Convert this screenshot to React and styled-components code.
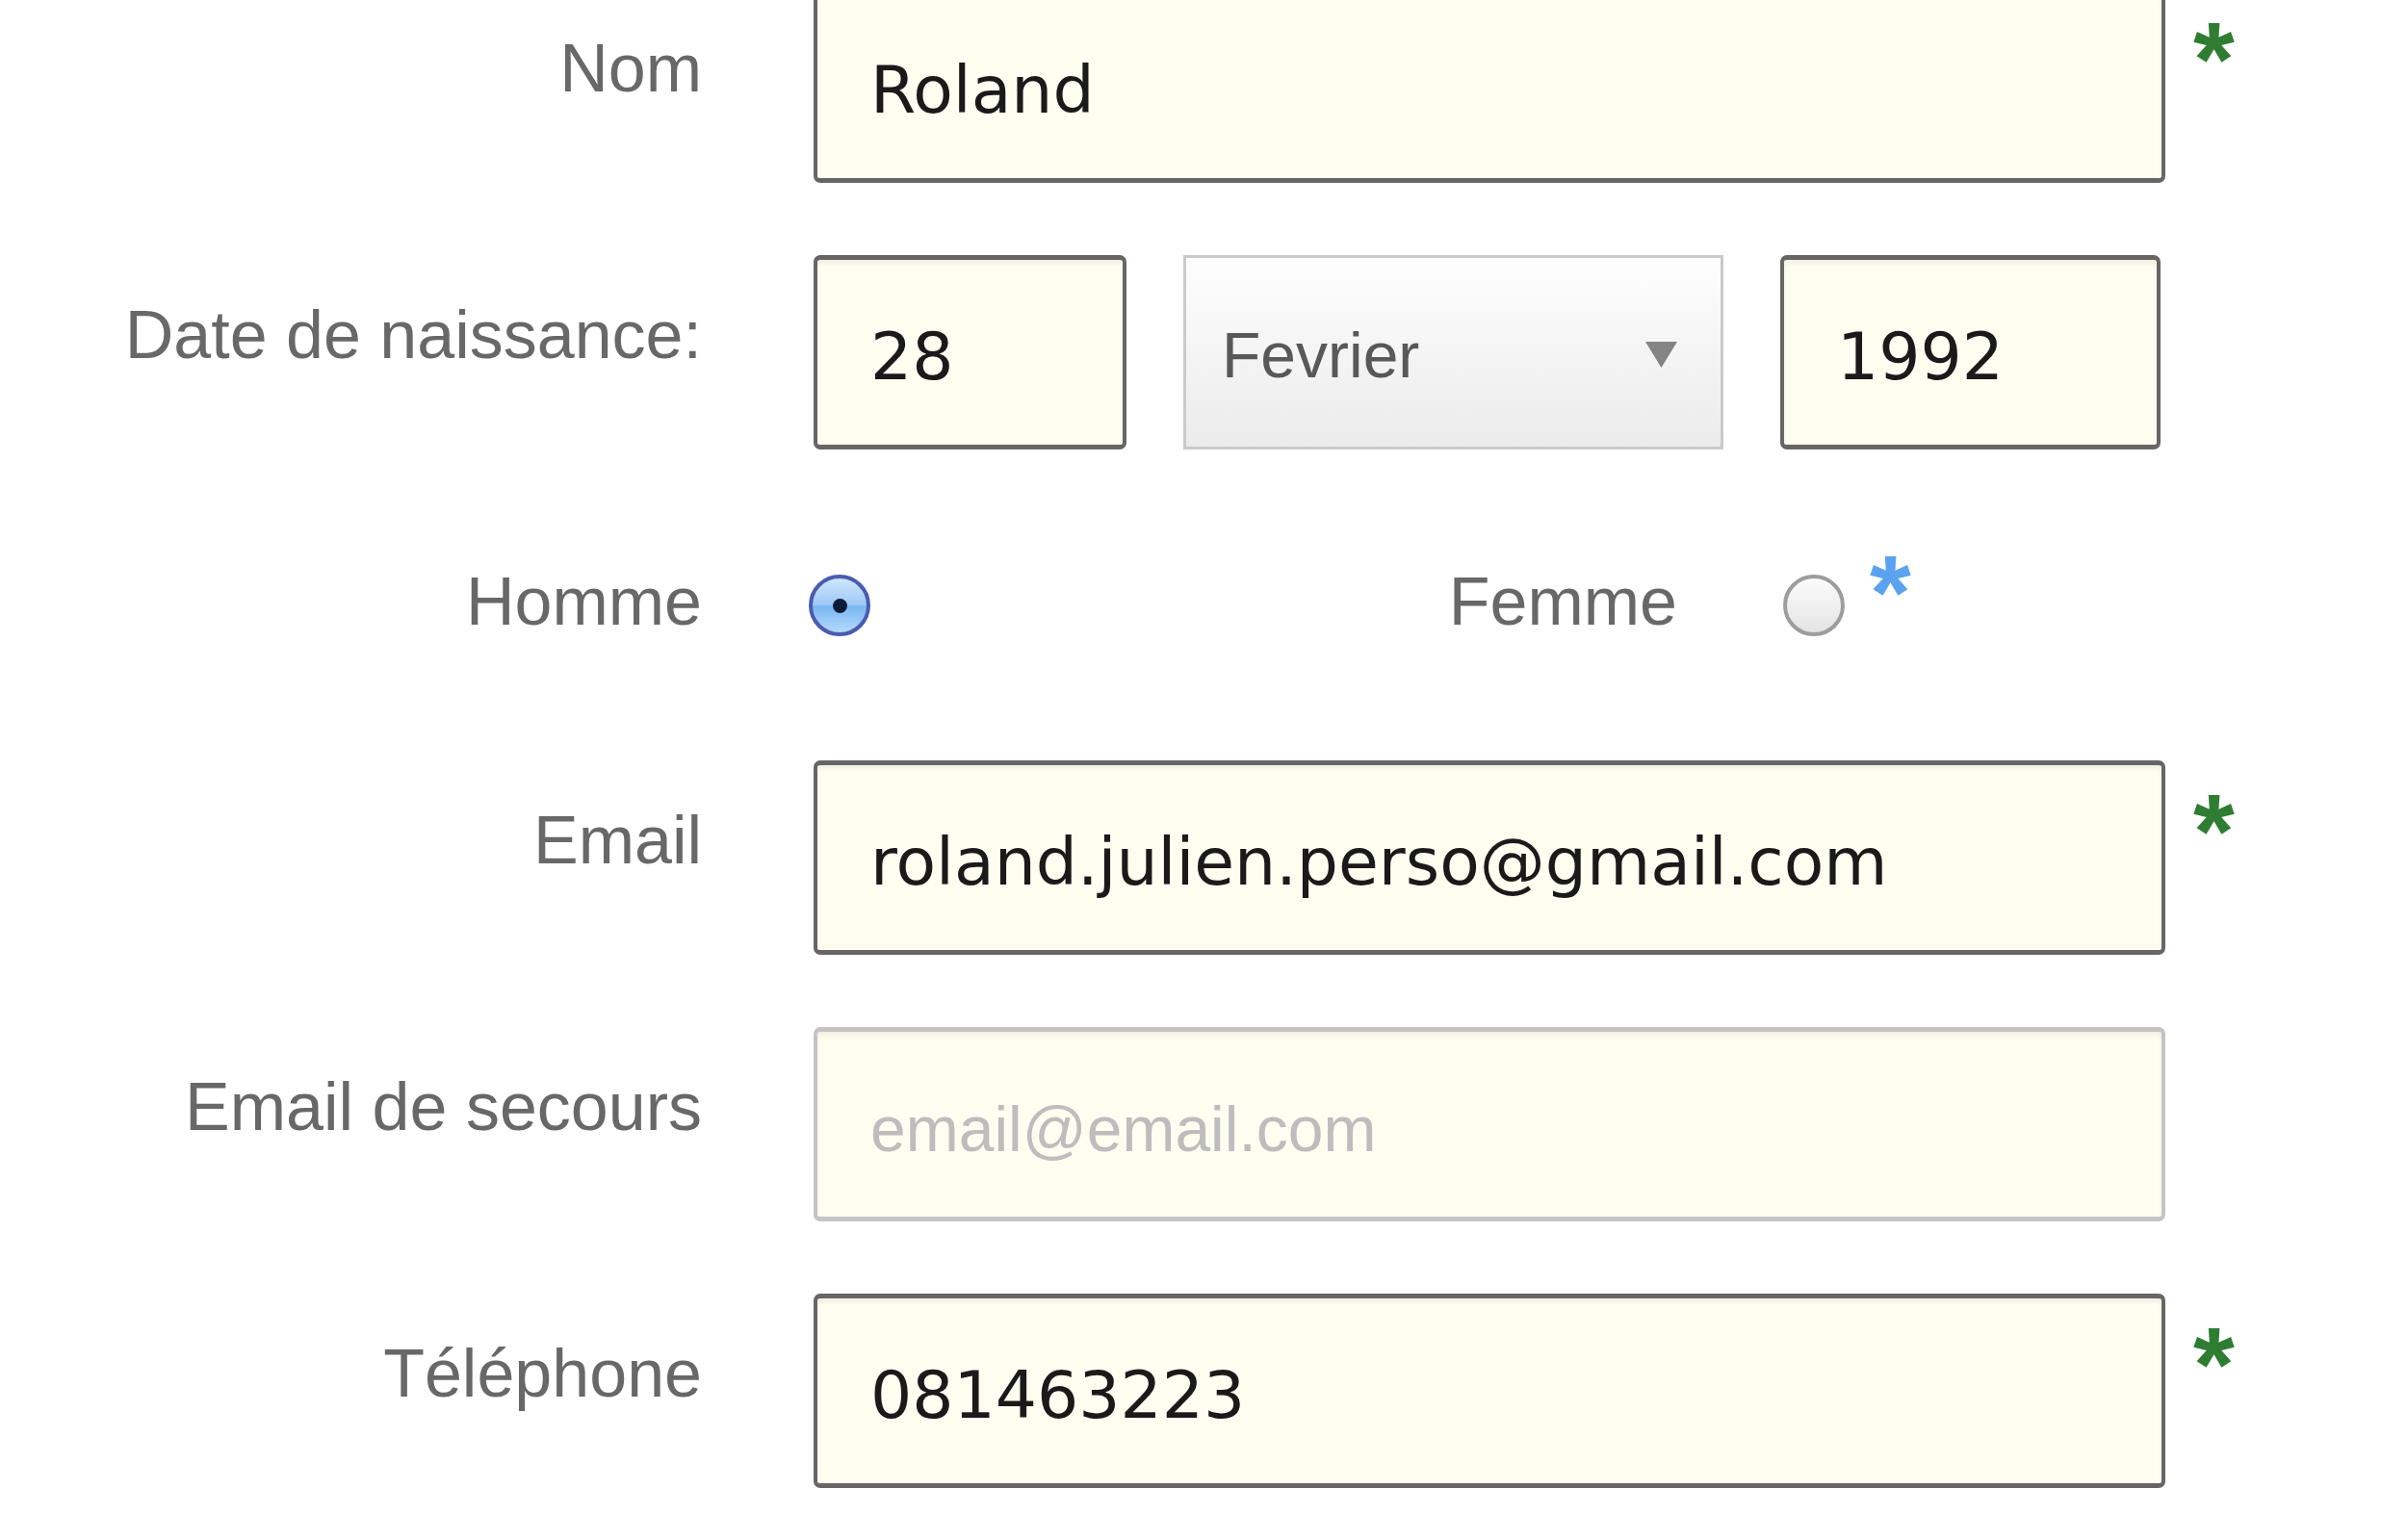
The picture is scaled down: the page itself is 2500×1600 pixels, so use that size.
import React from 'react';
import styled, { createGlobalStyle } from 'styled-components';

const GlobalStyle = createGlobalStyle`
  html, body {
    margin: 0;
    padding: 0;
    background: #ffffff;
  }
`;

const Form = styled.form`
  display: flex;
  flex-direction: column;
  gap: 75px;
  margin-top: -12px;
  width: 2500px;
`;

const Row = styled.div`
  display: flex;
  align-items: flex-start;
  height: ${(p) => p.$height || 202}px;
`;

const Label = styled.label`
  flex: none;
  width: ${(p) => p.$width || 729}px;
  box-sizing: border-box;
  padding-top: 43px;
  text-align: right;
  font-family: 'Liberation Sans', Arial, sans-serif;
  font-size: 70px;
  line-height: 80px;
  color: #686868;
  white-space: nowrap;
`;

const Field = styled.div`
  flex: none;
  display: flex;
  gap: 59px;
  width: 1404px;
  margin-left: 116px;
`;

const TextInput = styled.input`
  flex: none;
  box-sizing: border-box;
  width: ${(p) => (p.$width ? `${p.$width}px` : '100%')};
  height: 202px;
  margin: 0;
  padding: 8px 0 0 55px;
  border: 4px solid ${(p) => (p.$muted ? '#c4c4c4' : '#666666')};
  border-top-width: 5px;
  border-bottom-width: 5px;
  border-radius: 7px;
  background: #fdfdf0;
  box-shadow: inset 0 4px 4px rgba(0, 0, 0, 0.05);
  font-family: 'DejaVu Sans', Verdana, sans-serif;
  font-size: 68px;
  color: #1a1a1a;
  outline: none;

  &::placeholder {
    font-family: 'Liberation Sans', Arial, sans-serif;
    font-size: 66px;
    color: #bdbdbd;
  }
`;

const Select = styled.div`
  flex: none;
  box-sizing: border-box;
  display: flex;
  align-items: center;
  justify-content: space-between;
  width: 561px;
  height: 202px;
  padding: 5px 45px 0 37px;
  border: 3px solid #cacaca;
  background: linear-gradient(#fefefe, #ebebeb);
  font-family: 'Liberation Sans', Arial, sans-serif;
  font-size: 66px;
  color: #585858;
`;

const Arrow = () => (
  <svg width="33" height="27" viewBox="0 0 33 27">
    <polygon points="0,0 33,0 16.5,27" fill="#848484" />
  </svg>
);

const Mark = styled.span`
  flex: none;
  margin-left: ${(p) => p.$gap || 29}px;
  margin-top: 9px;
  font-family: 'Liberation Sans', Arial, sans-serif;
  font-weight: bold;
  font-size: 110px;
  line-height: normal;
  color: ${(p) => (p.$blue ? '#5ba3f0' : '#2f7d33')};
`;

const Radio = styled.span`
  flex: none;
  position: relative;
  box-sizing: border-box;
  width: 64px;
  height: 64px;
  margin-left: ${(p) => p.$gap}px;
  margin-top: 55px;
  border-radius: 50%;
  border: 4px solid ${(p) => (p.$checked ? '#4a5cae' : '#9d9d9d')};
  background: ${(p) =>
    p.$checked
      ? 'linear-gradient(#cfe6fd, #9fcaf6 48%, #7ab6f2 52%, #b4dafc)'
      : 'linear-gradient(#fbfbfb, #e4e4e4)'};

  &::after {
    content: '';
    display: ${(p) => (p.$checked ? 'block' : 'none')};
    position: absolute;
    left: 50%;
    top: 50%;
    width: 15px;
    height: 15px;
    margin: -7.5px 0 0 -7.5px;
    border-radius: 50%;
    background: #0d1c36;
  }
`;

export default function App() {
  return (
    <>
      <GlobalStyle />
      <Form>
        <Row>
          <Label>Nom</Label>
          <Field>
            <TextInput defaultValue="Roland" readOnly />
          </Field>
          <Mark>*</Mark>
        </Row>

        <Row>
          <Label>Date de naissance:</Label>
          <Field>
            <TextInput $width={325} defaultValue="28" readOnly />
            <Select>
              <span>Fevrier</span>
              <Arrow />
            </Select>
            <TextInput $width={395} defaultValue="1992" readOnly />
          </Field>
        </Row>

        <Row $height={173}>
          <Label>Homme</Label>
          <Radio $checked $gap={111} />
          <Label $width={838}>Femme</Label>
          <Radio $gap={110} />
          <Mark $blue $gap={26}>*</Mark>
        </Row>

        <Row>
          <Label>Email</Label>
          <Field>
            <TextInput defaultValue="roland.julien.perso@gmail.com" readOnly />
          </Field>
          <Mark>*</Mark>
        </Row>

        <Row>
          <Label>Email de secours</Label>
          <Field>
            <TextInput $muted placeholder="email@email.com" readOnly />
          </Field>
        </Row>

        <Row>
          <Label>Téléphone</Label>
          <Field>
            <TextInput defaultValue="081463223" readOnly />
          </Field>
          <Mark>*</Mark>
        </Row>
      </Form>
    </>
  );
}
